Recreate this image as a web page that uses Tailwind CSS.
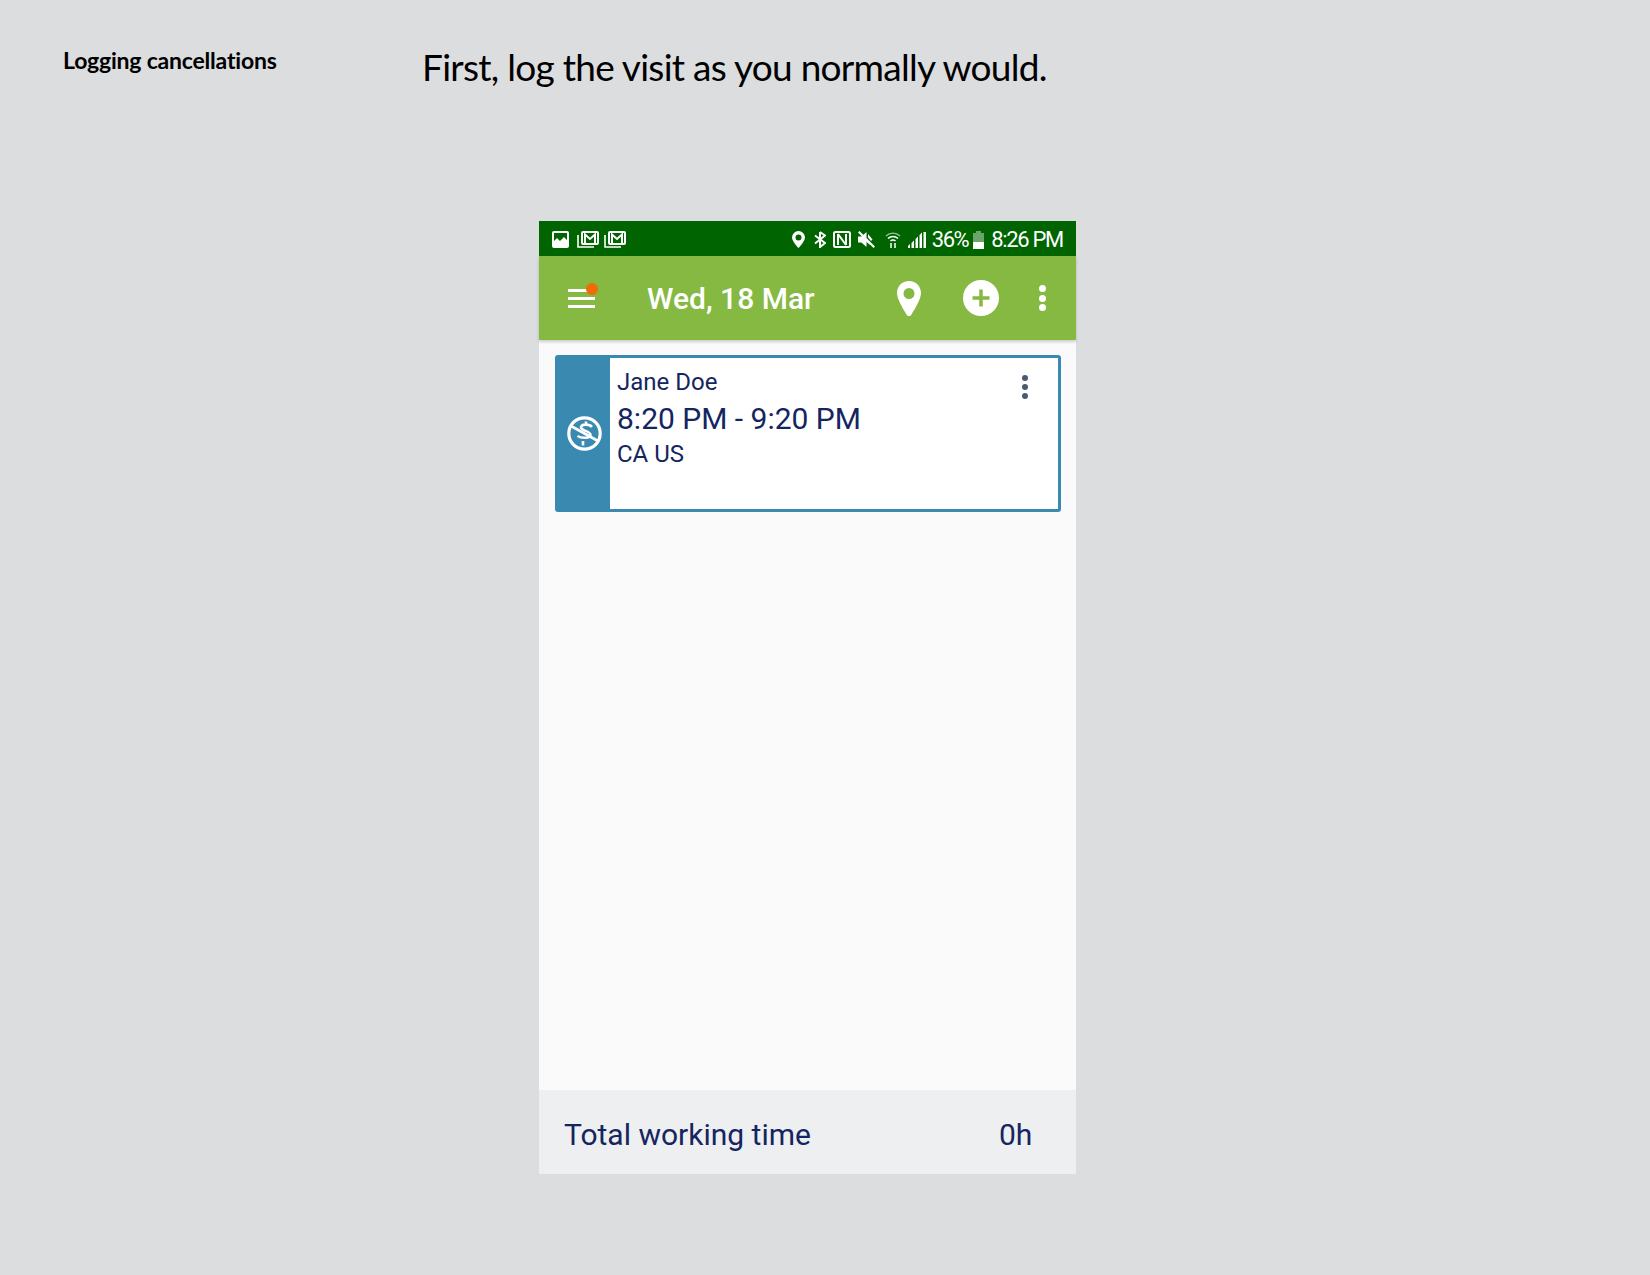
<!DOCTYPE html>
<html><head><meta charset="utf-8"><script src="https://cdn.jsdelivr.net/npm/@tailwindcss/browser@4"></script></head>
<body class="bg-[#dcdddf] w-[1650px] h-[1275px] overflow-hidden font-['Roboto',sans-serif]">
<header class="flex items-center h-[136px] pl-[63px]">
  <h2 class="w-[360px] font-['Lato',sans-serif] font-bold text-[23px] text-black tracking-[-0.2px] -mt-[16px]">Logging cancellations</h2>
  <h1 class="font-['Lato',sans-serif] text-[37px] text-black tracking-[-0.72px] -mt-[3px] -ml-[1px]">First, log the visit as you normally would.</h1>
</header>
<main class="mt-[85px] ml-[539px] w-[537px] h-[953px] flex flex-col bg-[#fafafa]">
  <div class="h-[35px] bg-[#006400] flex items-center text-white pl-[13px] pr-[13px] pt-[2px] text-[22px] shrink-0">
    <svg class="w-[17px] h-[17px] mr-[8px]" viewBox="0 0 17 17"><path fill="#fff" fill-rule="evenodd" d="M2 0h13a2 2 0 0 1 2 2v13a2 2 0 0 1-2 2H2a2 2 0 0 1-2-2V2a2 2 0 0 1 2-2zM2 2v8l3-3 3 3 4-4 3 3V2z"/></svg>
    <svg class="w-[22px] h-[17px] mr-[5px]" viewBox="0 0 22 17" fill="none" stroke="#fff"><rect x="5" y="1" width="16" height="12" stroke-width="2" rx="1"/><path d="M8 12V3.500l5 4.500 5-4.500V12" stroke-width="2"/><path d="M1 4v12h16" stroke-width="1.600"/></svg>
    <svg class="w-[22px] h-[17px]" viewBox="0 0 22 17" fill="none" stroke="#fff"><rect x="5" y="1" width="16" height="12" stroke-width="2" rx="1"/><path d="M8 12V3.500l5 4.500 5-4.500V12" stroke-width="2"/><path d="M1 4v12h16" stroke-width="1.600"/></svg>
    <div class="flex-1"></div>
    <svg class="w-[13px] h-[17px] mr-[9px]" viewBox="0 0 13 17"><path fill="#fff" fill-rule="evenodd" d="M6.500 0A6.500 6.500 0 0 0 0 6.500C0 10.500 6.500 17 6.500 17S13 10.500 13 6.500A6.500 6.500 0 0 0 6.500 0zm0 3.500a3 3 0 1 1 0 6 3 3 0 0 1 0-6z"/></svg>
    <svg class="w-[12px] h-[17px] mr-[7px]" viewBox="0 0 12 17" fill="none" stroke="#fff" stroke-width="2"><path d="M6 1v15l5-4L1 4.500M6 1l5 3.500L1 12.500"/></svg>
    <svg class="w-[18px] h-[17px] mr-[7px]" viewBox="0 0 18 17" fill="none" stroke="#fff"><rect x="1" y="1" width="16" height="15" rx="1.500" stroke-width="2"/><path d="M5 14V3M13 14V3M5 3l8 11" stroke-width="2"/></svg>
    <svg class="w-[17px] h-[17px] mr-[10px]" viewBox="0 0 17 17"><path fill="#fff" d="M0 5.500h3.500L8.500 1v6.500l3.500 4 1 1.500-1 1-3.500-3V16L3.500 11.500H0zM1.500 0 17 15.500 15.500 17 0 1.500zM10 3l4.500 5.500-1.500 1.500-3-3.500z"/></svg>
    <svg class="w-[16px] h-[17px] mr-[7px]" viewBox="0 0 16 17" fill="none" stroke="#fff"><path d="M1 5a10 10 0 0 1 14 0" stroke-width="1.300" opacity=".6"/><path d="M3 7.500a7 7 0 0 1 10 0" stroke-width="1.500"/><path d="M5.500 10a3.500 3.500 0 0 1 5 0" stroke-width="1.500"/><path d="M6 12v5M10 12v5" stroke-width="1.500"/></svg>
    <svg class="w-[18px] h-[17px] mr-[6px]" viewBox="0 0 18 17" fill="#fff"><path d="M0 17v-2l2-2v4zM3.500 17v-5l2.500-2.500V17zM7.500 17V8l2.500-2.500V17zM11.500 17V4L14 1.500V17zM15.500 17V1H18v16z"/></svg>
    <span class="tracking-[-1.500px] leading-none mr-[5px]">36%</span>
    <svg class="w-[11px] h-[18px] mr-[7px]" viewBox="0 0 11 18"><path fill="#fff" fill-opacity=".42" d="M3 0h5v2h3v9H0V2h3z"/><path fill="#fff" d="M0 11h11v7H0z"/></svg>
    <span class="tracking-[-1.300px] leading-none">8:26 PM</span>
  </div>
  <div class="relative z-10 h-[84px] bg-[#85b941] flex items-center text-white shrink-0 pl-[29px] shadow-[0_2px_3px_rgba(0,0,0,0.18)]">
    <div class="relative w-[27px] h-[19px] flex flex-col justify-between">
      <span class="h-[3px] bg-white"></span><span class="h-[3px] bg-white"></span><span class="h-[3px] bg-white"></span>
      <span class="absolute -right-[3px] -top-[6px] w-[12px] h-[12px] rounded-full bg-[#f26a0a]"></span>
    </div>
    <span class="ml-[52px] w-[250px] text-[30px] font-medium leading-none mt-[2px]">Wed, 18 Mar</span>
    <svg class="w-[24px] h-[35px]" viewBox="0 0 24 35"><path fill="#fff" fill-rule="evenodd" d="M12 0C5 0 0 5.500 0 12c0 6.500 7 17 9.500 21.500 1.100 2 3.900 2 5 0C17 29 24 18.500 24 12 24 5.500 19 0 12 0zm0 7a5.500 5.500 0 1 1 0 11 5.500 5.500 0 0 1 0-11z"/></svg>
    <svg class="w-[36px] h-[36px] ml-[42px]" viewBox="0 0 36 36"><circle cx="18" cy="18" r="18" fill="#fff"/><path d="M18 9.500v17M9.500 18h17" stroke="#85b941" stroke-width="3.500"/></svg>
    <div class="ml-[40px] flex flex-col gap-[2.500px]"><span class="w-[7px] h-[7px] rounded-full bg-white"></span><span class="w-[7px] h-[7px] rounded-full bg-white"></span><span class="w-[7px] h-[7px] rounded-full bg-white"></span></div>
  </div>
  <div class="flex-1 pt-[15px] px-[16px] pr-[15px]">
    <div class="h-[157px] w-[506px] border-[3px] border-[#3a89b0] rounded-[3px] bg-white flex text-[#14255f]">
      <div class="w-[52px] bg-[#3a89b0] flex items-center justify-center shrink-0">
        <svg class="w-[35px] h-[35px]" viewBox="0 0 35 35" fill="none" stroke="#fff"><circle cx="17.500" cy="17.500" r="15.700" stroke-width="3.200"/><path d="M4 10l27 15" stroke-width="2.600"/><path d="M25 11c-3-3.500-11-3-11 0.500 0 3 10 4 9.500 7.500-.5 3.500-9 3.500-13 1M19 5.500v4M16 25v4.500" stroke-width="2.600"/></svg>
      </div>
      <div class="flex-1 pl-[7px] pt-[10px] relative">
        <div class="text-[24px] leading-[28px]">Jane Doe</div>
        <div class="text-[30px] leading-[36px] mt-[5px]">8:20 PM - 9:20 PM</div>
        <div class="text-[24px] leading-[28px] mt-[3px]">CA US</div>
        <div class="absolute right-[30px] top-[17px] flex flex-col gap-[3px]"><span class="w-[6px] h-[6px] rounded-full bg-[#4a5a70]"></span><span class="w-[6px] h-[6px] rounded-full bg-[#4a5a70]"></span><span class="w-[6px] h-[6px] rounded-full bg-[#4a5a70]"></span></div>
      </div>
    </div>
  </div>
  <div class="h-[84px] bg-[#eeeff1] flex items-center shrink-0 pl-[25px] pt-[4px] text-[#14255f] text-[30px]">
    <span class="w-[435px]">Total working time</span><span>0h</span>
  </div>
</main>
</body></html>
